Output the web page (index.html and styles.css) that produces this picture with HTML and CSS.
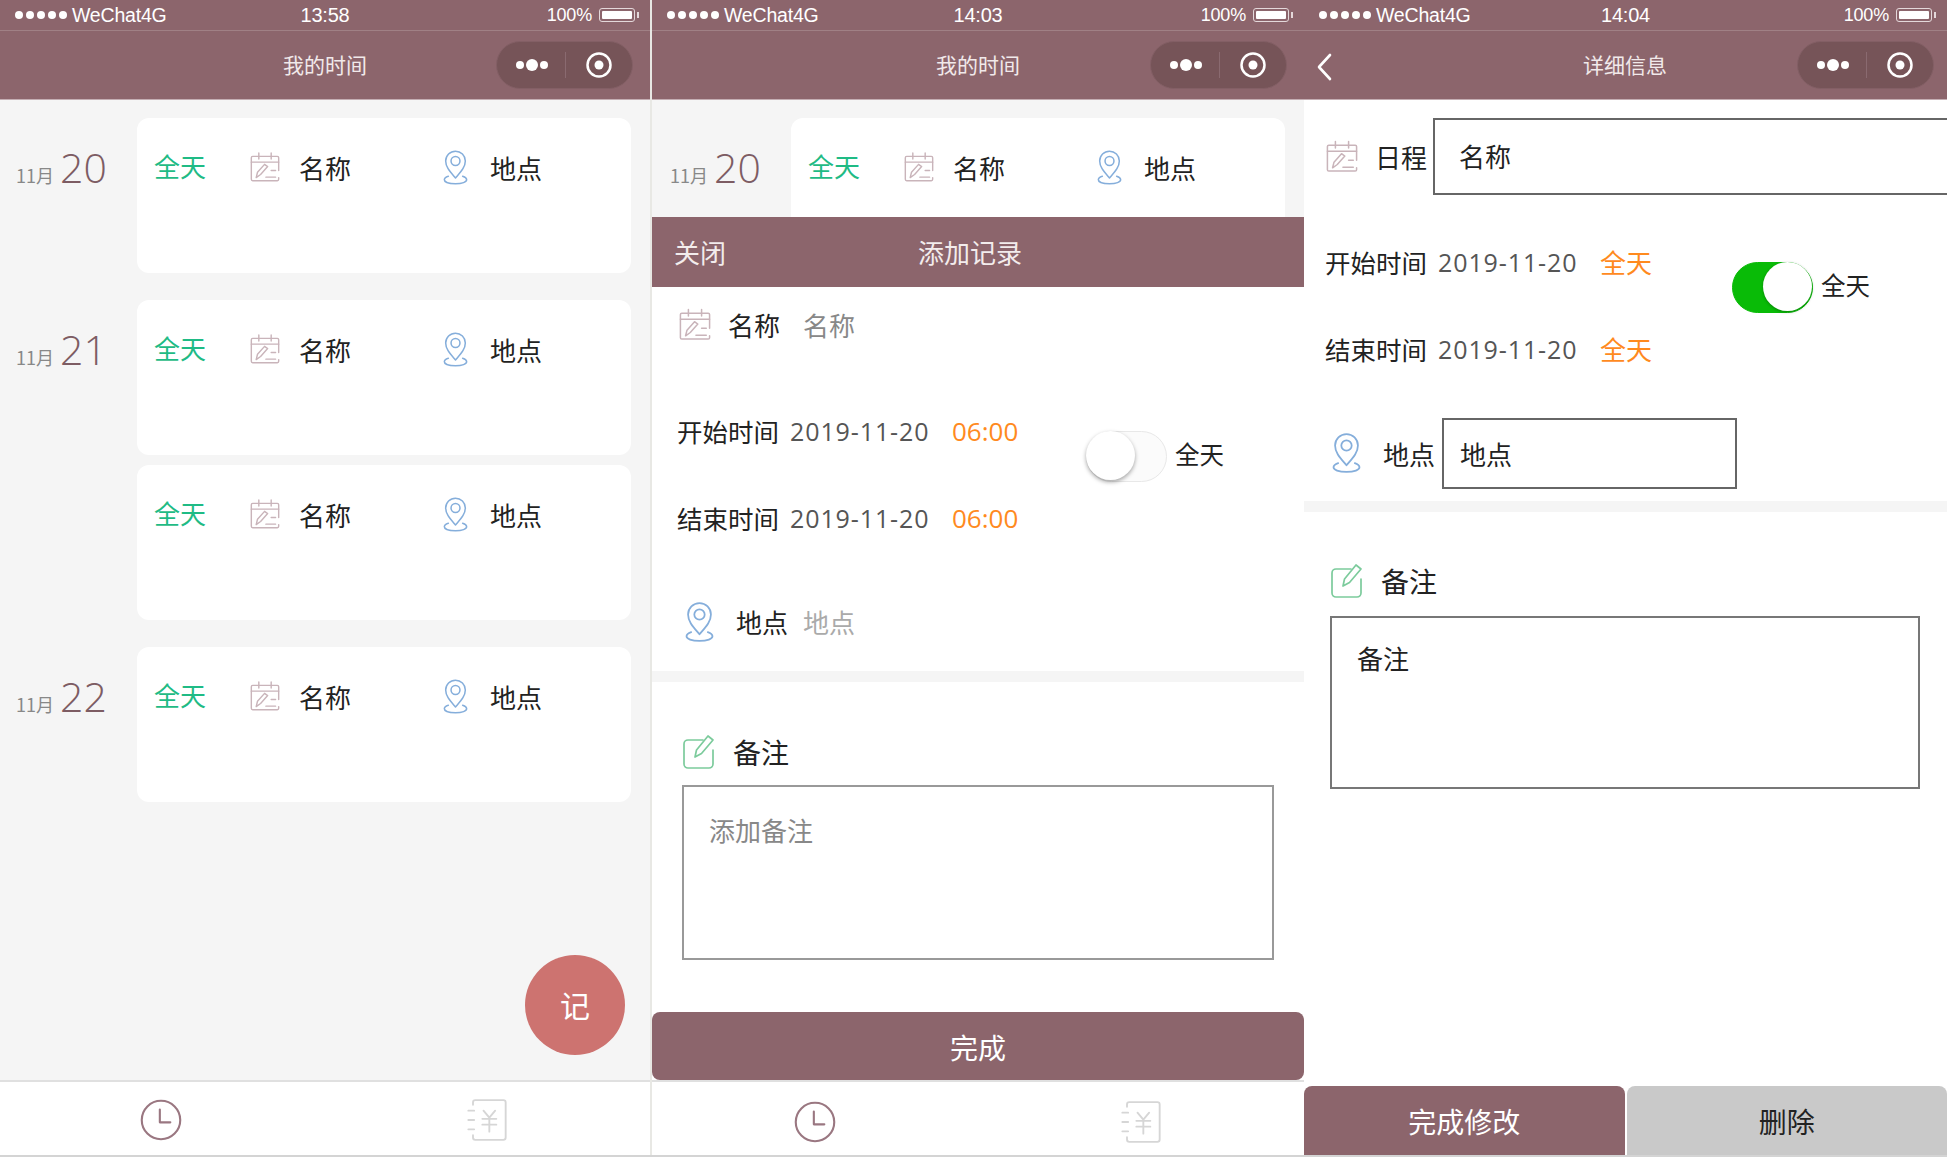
FILE: index.html
```html
<!DOCTYPE html>
<html lang="zh">
<head>
    <meta charset="UTF-8">
    <title>我的时间</title>
    <link rel="stylesheet" href="styles.css">
</head>
<body>
    <!-- shared icons -->
    <svg class="sprite" aria-hidden="true">
        <symbol id="i-cal" viewBox="0 0 34 34">
            <g fill="none" stroke="#c9b4ba" stroke-width="1.6" stroke-linecap="round" stroke-linejoin="round">
                <path d="M32.500 21V6.500a1.500 1.500 0 0 0-1.500-1.500H3a1.500 1.500 0 0 0-1.500 1.500V31A1.500 1.500 0 0 0 3 32.500h28a1.500 1.500 0 0 0 1.500-1.500v-2"/>
                <path d="M10 1v7M24 1v7M1.500 11.500h31"/>
                <path d="M7 29l1.500-6 8-9 3.500 2.500-8 9zM18 28.500h11M24 21h5"/>
            </g>
        </symbol>
        <symbol id="i-pin" viewBox="2 1 28 38.500">
            <g fill="none" stroke="#85aedb" stroke-width="1.700" stroke-linecap="round" stroke-linejoin="round">
                <path d="M16 32C10 25 5 20 5 13a11 11 0 0 1 22 0c0 7-5 12-11 19z"/>
                <circle cx="16" cy="13" r="5"/>
                <path d="M8 30c-3 1-4.500 2.500-4.500 4 0 2.500 5 4.500 12.500 4.500s12.500-2 12.500-4.500c0-1.500-1.500-3-4.500-4"/>
            </g>
        </symbol>
        <symbol id="i-note" viewBox="0 0 34 36">
            <g fill="none" stroke="#7ccb9c" stroke-width="1.700" stroke-linecap="round" stroke-linejoin="round">
                <path d="M21 6H6a4 4 0 0 0-4 4v20a4 4 0 0 0 4 4h21a4 4 0 0 0 4-4V16"/>
                <path d="M13 23l1.500-7L26 2l5 4-11.500 13.500z"/>
            </g>
        </symbol>
        <symbol id="i-clock" viewBox="0 0 36 36">
            <g fill="none" stroke="#9a7781" stroke-width="1.800" stroke-linecap="round" stroke-linejoin="round">
                <circle cx="18" cy="18" r="16.500"/>
                <path d="M17 9v11h9"/>
            </g>
        </symbol>
        <symbol id="i-bill" viewBox="0 0 36 36">
            <g fill="none" stroke="#d6d6d6" stroke-width="1.600" stroke-linecap="round" stroke-linejoin="round">
                <path d="M6 5V3a2 2 0 0 1 2-2h24a2 2 0 0 1 2 2v30a2 2 0 0 1-2 2H8a2 2 0 0 1-2-2v-2"/>
                <path d="M2 10h5M2 18h5M2 26h5"/>
                <path d="M15 10l5 6 5-6M14 17h12M14 22h12M20 16v12"/>
            </g>
        </symbol>
        <symbol id="i-more" viewBox="0 0 36 14">
            <circle cx="6" cy="7" r="4" fill="#fff"/>
            <circle cx="18" cy="7" r="6" fill="#fff"/>
            <circle cx="30" cy="7" r="4" fill="#fff"/>
        </symbol>
        <symbol id="i-target" viewBox="0 0 28 28">
            <circle cx="14" cy="14" r="11.500" fill="none" stroke="#fff" stroke-width="2.500"/>
            <circle cx="14" cy="14" r="4.500" fill="#fff"/>
        </symbol>
    </svg>

    <div class="screens">
        <!-- 列表 -->
        <section class="phone phone-a">
            <header class="top">
                <div class="status">
                    <div class="carrier"><span class="dots"><i></i><i></i><i></i><i></i><i></i></span>WeChat4G</div>
                    <div class="clock-text">13:58</div>
                    <div class="power">100%<span class="battery"><b></b></span></div>
                </div>
                <div class="nav">
                    <div></div>
                    <div class="nav-title">我的时间</div>
                    <div class="capsule"><svg class="cap-more"><use href="#i-more"/></svg><span class="cap-line"></span><svg class="cap-target"><use href="#i-target"/></svg></div>
                </div>
            </header>
            <div class="list">
                <div class="day">
                    <div class="date"><span class="month">11月</span><span class="num">20</span></div>
                    <div class="cards">
                        <div class="card"><span class="allday">全天</span><svg class="ic-cal"><use href="#i-cal"/></svg><span>名称</span><svg class="ic-pin"><use href="#i-pin"/></svg><span>地点</span></div>
                    </div>
                </div>
                <div class="day">
                    <div class="date"><span class="month">11月</span><span class="num">21</span></div>
                    <div class="cards">
                        <div class="card"><span class="allday">全天</span><svg class="ic-cal"><use href="#i-cal"/></svg><span>名称</span><svg class="ic-pin"><use href="#i-pin"/></svg><span>地点</span></div>
                        <div class="card"><span class="allday">全天</span><svg class="ic-cal"><use href="#i-cal"/></svg><span>名称</span><svg class="ic-pin"><use href="#i-pin"/></svg><span>地点</span></div>
                    </div>
                </div>
                <div class="day">
                    <div class="date"><span class="month">11月</span><span class="num">22</span></div>
                    <div class="cards">
                        <div class="card"><span class="allday">全天</span><svg class="ic-cal"><use href="#i-cal"/></svg><span>名称</span><svg class="ic-pin"><use href="#i-pin"/></svg><span>地点</span></div>
                    </div>
                </div>
            </div>
            <div class="fab">记</div>
            <footer class="tabs">
                <svg class="tab-ic tab-left"><use href="#i-clock"/></svg>
                <svg class="tab-ic tab-right"><use href="#i-bill"/></svg>
            </footer>
        </section>

        <!-- 添加记录 -->
        <section class="phone phone-b">
            <header class="top">
                <div class="status">
                    <div class="carrier"><span class="dots"><i></i><i></i><i></i><i></i><i></i></span>WeChat4G</div>
                    <div class="clock-text">14:03</div>
                    <div class="power">100%<span class="battery"><b></b></span></div>
                </div>
                <div class="nav">
                    <div></div>
                    <div class="nav-title">我的时间</div>
                    <div class="capsule"><svg class="cap-more"><use href="#i-more"/></svg><span class="cap-line"></span><svg class="cap-target"><use href="#i-target"/></svg></div>
                </div>
            </header>
            <div class="list list-cut">
                <div class="day">
                    <div class="date"><span class="month">11月</span><span class="num">20</span></div>
                    <div class="cards">
                        <div class="card"><span class="allday">全天</span><svg class="ic-cal"><use href="#i-cal"/></svg><span>名称</span><svg class="ic-pin"><use href="#i-pin"/></svg><span>地点</span></div>
                    </div>
                </div>
            </div>
            <div class="sheet-head">
                <span>关闭</span>
                <span class="sheet-title">添加记录</span>
            </div>
            <div class="row-name">
                <svg class="ic-cal"><use href="#i-cal"/></svg>
                <span class="row-label">名称</span>
                <span class="hint">名称</span>
            </div>
            <div class="times">
                <div class="time-rows">
                    <div class="time-row"><span class="t-label">开始时间</span><span class="t-date">2019-11-20</span><span class="t-val">06:00</span></div>
                    <div class="time-row"><span class="t-label">结束时间</span><span class="t-date">2019-11-20</span><span class="t-val">06:00</span></div>
                </div>
                <div class="switch-wrap">
                    <span class="switch"></span>
                    <span class="switch-text">全天</span>
                </div>
            </div>
            <div class="row-place">
                <svg class="ic-pin"><use href="#i-pin"/></svg>
                <span class="row-label">地点</span>
                <span class="hint hint-light">地点</span>
            </div>
            <div class="divider"></div>
            <div class="note">
                <div class="note-head"><svg class="ic-note"><use href="#i-note"/></svg><span>备注</span></div>
                <div class="note-box hint">添加备注</div>
            </div>
            <div class="btn-done">完成</div>
            <footer class="tabs">
                <svg class="tab-ic tab-left"><use href="#i-clock"/></svg>
                <svg class="tab-ic tab-right"><use href="#i-bill"/></svg>
            </footer>
        </section>

        <!-- 详细信息 -->
        <section class="phone phone-c">
            <header class="top">
                <div class="status">
                    <div class="carrier"><span class="dots"><i></i><i></i><i></i><i></i><i></i></span>WeChat4G</div>
                    <div class="clock-text">14:04</div>
                    <div class="power">100%<span class="battery"><b></b></span></div>
                </div>
                <div class="nav">
                    <svg class="back" viewBox="0 0 16 28"><path d="M14 2L3 14l11 12" fill="none" stroke="#fff" stroke-width="2.600" stroke-linecap="round" stroke-linejoin="round"/></svg>
                    <div class="nav-title">详细信息</div>
                    <div class="capsule"><svg class="cap-more"><use href="#i-more"/></svg><span class="cap-line"></span><svg class="cap-target"><use href="#i-target"/></svg></div>
                </div>
            </header>
            <div class="row-edit">
                <svg class="ic-cal"><use href="#i-cal"/></svg>
                <span class="row-label">日程</span>
                <div class="field field-wide">名称</div>
            </div>
            <div class="times">
                <div class="time-rows">
                    <div class="time-row"><span class="t-label">开始时间</span><span class="t-date">2019-11-20</span><span class="t-val t-cn">全天</span></div>
                    <div class="time-row"><span class="t-label">结束时间</span><span class="t-date">2019-11-20</span><span class="t-val t-cn">全天</span></div>
                </div>
                <div class="switch-wrap">
                    <span class="switch on"></span>
                    <span class="switch-text">全天</span>
                </div>
            </div>
            <div class="row-place-edit">
                <svg class="ic-pin"><use href="#i-pin"/></svg>
                <span class="row-label">地点</span>
                <div class="field field-small">地点</div>
            </div>
            <div class="divider"></div>
            <div class="note">
                <div class="note-head"><svg class="ic-note"><use href="#i-note"/></svg><span>备注</span></div>
                <div class="note-box">备注</div>
            </div>
            <div class="btn-pair">
                <div class="btn-save">完成修改</div>
                <div class="btn-del">删除</div>
            </div>
        </section>
    </div>
</body>
</html>
```

FILE: styles.css
```css
body {
    margin: 0;
    height: 1157px;
    overflow: hidden;
    background-color: #fff;
    font-family: "Noto Sans CJK SC", "Noto Sans", sans-serif;
    font-size: 26px;
    color: #222;
}

.sprite {
    position: absolute;
    width: 0;
    height: 0;
}

.screens {
    display: flex;
    height: 1155px;
    border-bottom: 2px solid #d4d4d4;
    box-sizing: content-box;
}

.phone {
    position: relative;
    display: flex;
    flex-direction: column;
    flex: none;
    overflow: hidden;
    background-color: #fff;
}

.phone-a {
    width: 650px;
    background-color: #f5f5f5;
    border-right: 2px solid #e8e8e4;
}

.phone-b {
    width: 652px;
}

.phone-c {
    width: 643px;
}

/* status bar + nav */
.top {
    flex: none;
    height: 99px;
    background-color: #8c656c;
    color: #fff;
    border-bottom: 1px solid #c4aeb3;
}

.status {
    display: grid;
    grid-template-columns: 1fr auto 1fr;
    align-items: center;
    height: 30px;
    padding: 0 15px;
    border-bottom: 1px solid #a08085;
    font-family: "Liberation Sans", sans-serif;
    font-size: 19.5px;
    letter-spacing: -0.2px;
}

.carrier {
    display: flex;
    align-items: center;
}

.dots {
    display: flex;
    gap: 3px;
    margin-right: 5px;
}

.dots i {
    width: 8px;
    height: 8px;
    border-radius: 50%;
    background-color: #fff;
}

.clock-text {
    font-size: 20px;
}

.power {
    display: flex;
    align-items: center;
    justify-content: flex-end;
    font-size: 18px;
}

.battery {
    position: relative;
    display: block;
    width: 36px;
    height: 14px;
    margin-left: 7px;
    padding: 2px;
    box-sizing: border-box;
    border: 1px solid #e4d8da;
    border-radius: 3px;
}

.battery b {
    display: block;
    width: 100%;
    height: 100%;
    background-color: #fff;
    border-radius: 1px;
}

.battery::after {
    content: "";
    position: absolute;
    right: -5px;
    top: 3px;
    width: 2px;
    height: 6px;
    background-color: #e4d8da;
}

.nav {
    display: grid;
    grid-template-columns: 1fr auto 1fr;
    align-items: center;
    height: 68px;
    padding: 0 17px;
    box-sizing: border-box;
}

.phone-c .nav {
    padding: 0 13px 0 12px;
}

.nav-title {
    margin-bottom: 2px;
    font-size: 21px;
    color: #f1e9ea;
}

.capsule {
    display: flex;
    align-items: center;
    justify-self: end;
    width: 137px;
    height: 48px;
    box-sizing: border-box;
    padding-left: 17px;
    border-radius: 24px;
    background-color: #765458;
    border: 1px solid #835f65;
}

.cap-more {
    width: 36px;
    height: 14px;
}

.cap-line {
    width: 1px;
    height: 26px;
    margin: 0 19px 0 15px;
    background-color: #8a6a70;
}

.cap-target {
    width: 28px;
    height: 28px;
}

.back {
    width: 16px;
    height: 28px;
    margin: 3px 0 0 0;
}

/* list */
.list {
    flex: 1;
    padding-top: 18px;
}

.list-cut {
    flex: none;
    height: 99px;
    padding-left: 2px;
    overflow: hidden;
    background-color: #f5f5f5;
}

.day {
    display: flex;
    margin-bottom: 27px;
}

.date {
    display: flex;
    align-items: baseline;
    width: 137px;
    height: 50px;
    margin-top: 24px;
    padding-left: 16px;
    box-sizing: border-box;
    color: #888;
}

.month {
    margin-right: 6px;
    font-size: 18px;
}

.num {
    font-family: "Open Sans", sans-serif;
    font-weight: 300;
    font-size: 41px;
    line-height: 50px;
    color: #7d5c63;
}

.cards {
    display: flex;
    flex-direction: column;
    gap: 10px;
    width: 494px;
}

.card {
    display: grid;
    grid-template-columns: 96px 49px 144px 47px 1fr;
    align-items: center;
    height: 155px;
    box-sizing: border-box;
    padding: 29px 0 89px 17px;
    background-color: #fff;
    border-radius: 12px;
}

.allday {
    margin-bottom: 3px;
    color: #1fbb85;
}

.ic-cal {
    flex: none;
    width: 32px;
    height: 33px;
}

.card .ic-cal {
    width: 30px;
    height: 30px;
}

.ic-pin {
    flex: none;
    width: 31px;
    height: 40px;
}

.card .ic-pin {
    width: 25px;
    height: 35px;
}

.ic-note {
    flex: none;
    width: 34px;
    height: 36px;
}

.fab {
    position: absolute;
    left: 525px;
    top: 955px;
    display: flex;
    align-items: center;
    justify-content: center;
    width: 100px;
    height: 100px;
    padding-bottom: 3px;
    box-sizing: border-box;
    border-radius: 50%;
    background-color: #cd7370;
    color: #fff;
    font-size: 30px;
}

.tabs {
    display: flex;
    flex: none;
    align-items: center;
    height: 75px;
    padding-top: 3px;
    box-sizing: border-box;
    background-color: #fff;
    border-top: 2px solid #e0e0e0;
}

.phone-b .tabs {
    padding: 6px 0 0 2px;
}

.tab-ic {
    width: 42px;
    height: 42px;
}

.tab-left {
    margin-left: 140px;
}

.tab-right {
    margin-left: 284px;
}

/* add form */
.sheet-head {
    display: flex;
    flex: none;
    align-items: center;
    height: 70px;
    padding: 0 0 2px 22px;
    box-sizing: border-box;
    background-color: #8c656c;
    color: #f3ecec;
    font-size: 26px;
}

.sheet-title {
    margin-left: 192px;
}

.row-name {
    display: flex;
    flex: none;
    align-items: center;
    height: 76px;
    padding: 0 0 2px 27px;
    box-sizing: border-box;
}

.row-label {
    flex: none;
    color: #222;
}

.row-name .row-label {
    margin-left: 17px;
}

.hint {
    color: #888;
}

.hint-light {
    color: #aaa;
}

.row-name .hint {
    margin-left: 23px;
}

.times {
    display: flex;
    flex: none;
    align-items: flex-start;
    margin-top: 24px;
    padding-left: 25px;
}

.phone-b .times {
    margin-bottom: 1px;
}

.phone-c .times {
    margin-top: 23px;
    margin-bottom: 1px;
    padding-left: 21px;
}

.time-rows {
    width: 409px;
}

.phone-c .time-rows {
    width: 407px;
}

.time-row {
    display: flex;
    align-items: center;
    height: 87px;
}

.t-label {
    width: 113px;
    font-size: 25.5px;
}

.t-date {
    width: 162px;
    font-family: "Open Sans", sans-serif;
    font-size: 25px;
    letter-spacing: 0.9px;
    color: #555;
}

.t-val {
    font-family: "Open Sans", sans-serif;
    font-size: 26px;
    color: #ff8a1e;
}

.t-cn {
    font-family: "Noto Sans CJK SC", sans-serif;
    font-size: 26px;
}

.switch-wrap {
    display: flex;
    align-items: center;
    gap: 8px;
    margin-top: 44px;
}

.switch-text {
    margin-bottom: 6px;
    font-size: 24.5px;
}

.switch {
    position: relative;
    display: block;
    width: 81px;
    height: 51px;
    box-sizing: border-box;
    border: 1px solid #e8e8e8;
    border-radius: 26px;
    background-color: #fbfbfb;
}

.switch::after {
    content: "";
    position: absolute;
    left: -1px;
    top: -1px;
    width: 49px;
    height: 49px;
    border-radius: 50%;
    background-color: #fff;
    box-shadow: 0 2px 4px rgba(0, 0, 0, 0.35);
}

.switch.on {
    background-color: #09bb07;
    border-color: #09bb07;
}

.switch.on::after {
    left: 30px;
    box-shadow: 0 1px 3px rgba(0, 0, 0, 0.3);
}

.row-place {
    display: flex;
    flex: none;
    align-items: center;
    height: 109px;
    padding: 10px 0 0 32px;
    box-sizing: border-box;
}

.row-place .row-label {
    margin-left: 21px;
}

.row-place .hint {
    margin-left: 15px;
}

.divider {
    flex: none;
    height: 11px;
    background-color: #f5f5f5;
}

.note {
    flex: none;
    padding: 52px 30px 0;
}

.note-head {
    display: flex;
    align-items: center;
    gap: 17px;
    height: 36px;
    font-size: 28px;
}

.note-box {
    height: 175px;
    margin-top: 15px;
    padding: 23px 25px;
    box-sizing: border-box;
    border: 2px solid #999;
    line-height: 40px;
}

.btn-done {
    display: flex;
    flex: none;
    align-items: center;
    justify-content: center;
    height: 68px;
    margin-top: auto;
    padding-top: 2px;
    box-sizing: border-box;
    border-radius: 8px;
    background-color: #8c656c;
    color: #fff;
    font-size: 28px;
}

/* detail */
.row-edit {
    display: flex;
    flex: none;
    align-items: center;
    margin-top: 18px;
    padding-left: 22px;
}

.row-edit .row-label {
    margin-left: 17px;
    margin-right: 6px;
}

.field {
    display: flex;
    flex: none;
    align-items: center;
    box-sizing: border-box;
    border: 2px solid #666;
    background-color: #fff;
}

.field-wide {
    width: 640px;
    height: 77px;
    padding: 0 0 2px 24px;
}

.field-small {
    width: 295px;
    height: 71px;
    padding-left: 16px;
}

.row-place-edit {
    display: flex;
    flex: none;
    align-items: center;
    height: 108px;
    padding: 12px 0 0 27px;
    box-sizing: border-box;
}

.row-place-edit .row-label {
    margin-left: 21px;
    margin-right: 7px;
}

.phone-c .note {
    padding: 51px 27px 0 26px;
}

.phone-c .note-box {
    height: 173px;
    margin-top: 17px;
    padding: 20px 25px;
    border-color: #777;
    color: #222;
}

.btn-pair {
    display: flex;
    flex: none;
    gap: 2px;
    height: 69px;
    margin-top: auto;
    font-size: 28px;
}

.btn-save,
.btn-del {
    display: flex;
    flex: 1;
    align-items: center;
    justify-content: center;
    border-radius: 8px 8px 0 0;
}

.btn-save {
    background-color: #8c656c;
    color: #fff;
}

.btn-del {
    background-color: #c9c9c9;
    color: #222;
}
```
